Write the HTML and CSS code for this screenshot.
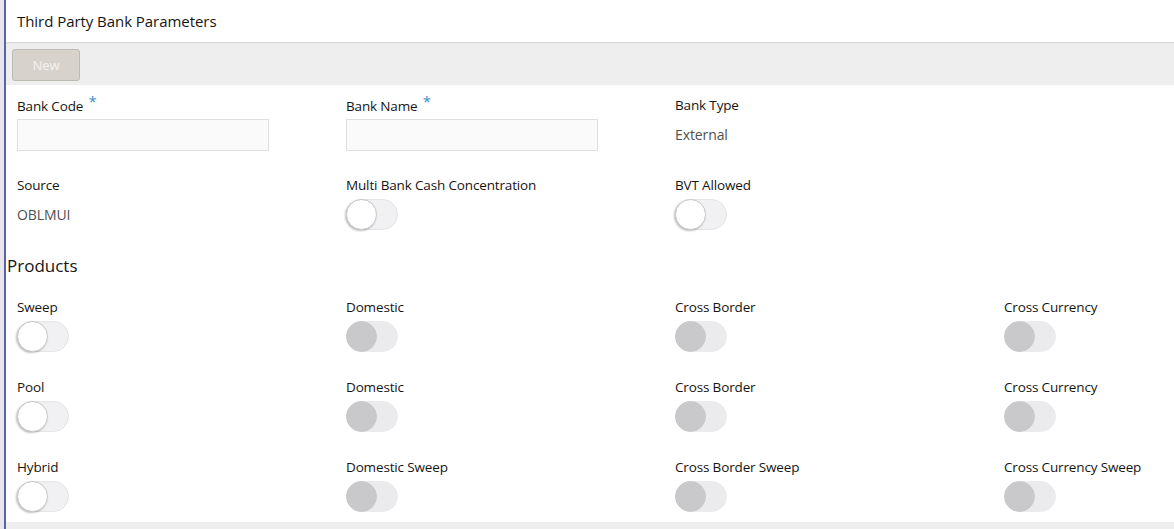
FILE: index.html
```html
<!DOCTYPE html>
<html>
<head>
<meta charset="utf-8">
<link rel="stylesheet" href="styles.css">
</head>
<body>
<div class="page">
  <header class="header"><h1 class="title">Third Party Bank Parameters</h1></header>
  <div class="toolbar"><button class="btn" type="button">New</button></div>
  <div class="form">
    <div class="grid">
      <div class="field">
        <div class="label">Bank Code <span class="req">*</span></div>
        <div class="input"></div>
      </div>
      <div class="field">
        <div class="label">Bank Name <span class="req">*</span></div>
        <div class="input"></div>
      </div>
      <div class="field">
        <div class="label">Bank Type</div>
        <div class="value">External</div>
      </div>
      <div class="field"></div>

      <div class="field">
        <div class="label">Source</div>
        <div class="value">OBLMUI</div>
      </div>
      <div class="field">
        <div class="label">Multi Bank Cash Concentration</div>
        <div class="toggle"><span class="knob"></span></div>
      </div>
      <div class="field">
        <div class="label">BVT Allowed</div>
        <div class="toggle"><span class="knob"></span></div>
      </div>
      <div class="field"></div>
    </div>

    <h2 class="section">Products</h2>

    <div class="grid products">
      <div class="field"><div class="label">Sweep</div><div class="toggle"><span class="knob"></span></div></div>
      <div class="field"><div class="label">Domestic</div><div class="toggle disabled"><span class="knob"></span></div></div>
      <div class="field"><div class="label">Cross Border</div><div class="toggle disabled"><span class="knob"></span></div></div>
      <div class="field"><div class="label">Cross Currency</div><div class="toggle disabled"><span class="knob"></span></div></div>

      <div class="field"><div class="label">Pool</div><div class="toggle"><span class="knob"></span></div></div>
      <div class="field"><div class="label">Domestic</div><div class="toggle disabled"><span class="knob"></span></div></div>
      <div class="field"><div class="label">Cross Border</div><div class="toggle disabled"><span class="knob"></span></div></div>
      <div class="field"><div class="label">Cross Currency</div><div class="toggle disabled"><span class="knob"></span></div></div>

      <div class="field"><div class="label">Hybrid</div><div class="toggle"><span class="knob"></span></div></div>
      <div class="field"><div class="label">Domestic Sweep</div><div class="toggle disabled"><span class="knob"></span></div></div>
      <div class="field"><div class="label">Cross Border Sweep</div><div class="toggle disabled"><span class="knob"></span></div></div>
      <div class="field"><div class="label">Cross Currency Sweep</div><div class="toggle disabled"><span class="knob"></span></div></div>
    </div>
  </div>
  <div class="footer"></div>
</div>
</body>
</html>
```

FILE: styles.css
```css
html {
  background: #e6e6ec;
}
body {
  margin: 0;
  padding-left: 4px;
  font-family: "Open Sans", "Noto Sans", sans-serif;
  color: #161513;
}
.page {
  background: #fff;
  border-left: 2px solid #5a63a8;
  height: 529px;
  overflow: hidden;
}
.header {
  height: 42px;
  display: flex;
  align-items: center;
  padding-left: 11px;
}
.title {
  margin: 0;
  font-size: 15px;
  font-weight: 400;
  letter-spacing: -0.05px;
}
.toolbar {
  height: 42px;
  background: #eeeeee;
  border-top: 1px solid #dcdcdc;
  box-shadow: inset 0 1px 0 #e8e8e8;
  display: flex;
  align-items: center;
  padding-left: 6px;
}
.btn {
  width: 68px;
  height: 32px;
  margin-top: 1px;
  background: #d7d3cc;
  border: 1px solid #bdbab4;
  border-radius: 3px;
  color: #f4f2ee;
  font-family: "Open Sans", sans-serif;
  font-size: 13px;
  padding: 0;
}
.form {
  padding: 12px 0 0 11px;
}
.grid {
  display: grid;
  grid-template-columns: repeat(4, 329px);
  row-gap: 26px;
}
.products {
  row-gap: 27px;
}
.field {
  display: flex;
  flex-direction: column;
  gap: 4px;
}
.label {
  height: 18px;
  line-height: 16px;
  font-size: 13.5px;
  letter-spacing: -0.15px;
  white-space: nowrap;
}
.req {
  color: #3d8fd1;
  font-size: 15px;
  position: relative;
  top: -4px;
  margin-left: 2px;
}
.input {
  width: 250px;
  height: 30px;
  background: #fafafb;
  border: 1px solid #dfdfe2;
}
.value {
  height: 32px;
  line-height: 32px;
  font-size: 14px;
  letter-spacing: -0.1px;
  color: #505050;
}
.toggle {
  width: 52px;
  height: 31px;
  border-radius: 16px;
  background: #f1f1f3;
  border: 1px solid #e4e4e6;
  position: relative;
  box-sizing: border-box;
}
.knob {
  position: absolute;
  left: -1px;
  top: -1px;
  width: 31px;
  height: 31px;
  border-radius: 50%;
  background: #fff;
  box-sizing: border-box;
  border: 1px solid #c9c9c9;
  box-shadow: -1px 1px 2px rgba(0, 0, 0, 0.25);
}
.toggle.disabled {
  background: #ebebee;
  border-color: #ebebee;
}
.toggle.disabled .knob {
  background: #c9c9cb;
  border-color: #c9c9cb;
  box-shadow: none;
}
.section {
  margin: 23px 0 21px -10px;
  font-size: 17px;
  font-weight: 400;
  height: 24px;
  line-height: 24px;
}
.footer {
  margin-top: 10px;
  height: 20px;
  background: #eeeeee;
}
```
